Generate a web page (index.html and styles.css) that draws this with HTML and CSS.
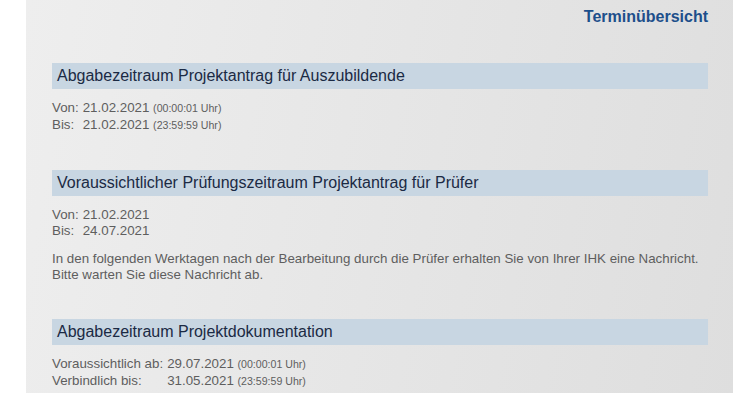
FILE: index.html
```html
<!DOCTYPE html>
<html lang="de">
<head>
    <meta charset="UTF-8">
    <meta name="viewport" content="width=device-width, initial-scale=1.0">
    <title>Terminübersicht</title>
    <link rel="stylesheet" href="styles.css">
</head>
<body>
    <div class="panel">
        <h1 class="page-title">Terminübersicht</h1>

        <!-- Projektantrag -->
        <div class="termin">
            <h2 class="termin-head">Abgabezeitraum Projektantrag für Auszubildende</h2>
            <div class="dates">
                <span>Von:</span><span>21.02.2021 <small>(00:00:01 Uhr)</small></span>
                <span>Bis:</span><span>21.02.2021 <small>(23:59:59 Uhr)</small></span>
            </div>
        </div>

        <!-- Prüfung -->
        <div class="termin">
            <h2 class="termin-head">Voraussichtlicher Prüfungszeitraum Projektantrag für Prüfer</h2>
            <div class="dates">
                <span>Von:</span><span>21.02.2021</span>
                <span>Bis:</span><span>24.07.2021</span>
            </div>
            <p class="note">In den folgenden Werktagen nach der Bearbeitung durch die Prüfer erhalten Sie von Ihrer IHK eine Nachricht.<br>Bitte warten Sie diese Nachricht ab.</p>
        </div>

        <!-- Dokumentation -->
        <div class="termin">
            <h2 class="termin-head">Abgabezeitraum Projektdokumentation</h2>
            <div class="dates">
                <span>Voraussichtlich ab:</span><span>29.07.2021 <small>(00:00:01 Uhr)</small></span>
                <span>Verbindlich bis:</span><span>31.05.2021 <small>(23:59:59 Uhr)</small></span>
            </div>
        </div>
    </div>
</body>
</html>
```

FILE: styles.css
```css
* {
    margin: 0;
    padding: 0;
    box-sizing: border-box;
}

body {
    background: #fff;
    font-family: 'Liberation Sans', Arial, sans-serif;
    color: #5e5e5e;
}

.panel {
    margin-left: 26px;
    width: 707px;
    min-height: 400px;
    padding: 7px 25px 20px 26px;
    background: linear-gradient(100deg, #eeeeee 0%, #e6e6e6 50%, #dedede 100%);
}

.page-title {
    text-align: right;
    font-size: 16px;
    font-weight: bold;
    line-height: 19px;
    color: #1d4f8b;
}

.termin {
    margin-top: 37px;
}

.termin-head {
    background: #c8d6e2;
    height: 26px;
    line-height: 26px;
    padding-left: 5px;
    font-size: 16px;
    font-weight: normal;
    color: #1b2a44;
}

.dates {
    display: grid;
    grid-template-columns: max-content 1fr;
    column-gap: 4px;
    margin-top: 11px;
    font-size: 13.33px;
    line-height: 15.5px;
}

.dates small {
    font-size: 10.6px;
}

.note {
    margin-top: 13px;
    font-size: 13.33px;
    line-height: 15.6px;
}
```
